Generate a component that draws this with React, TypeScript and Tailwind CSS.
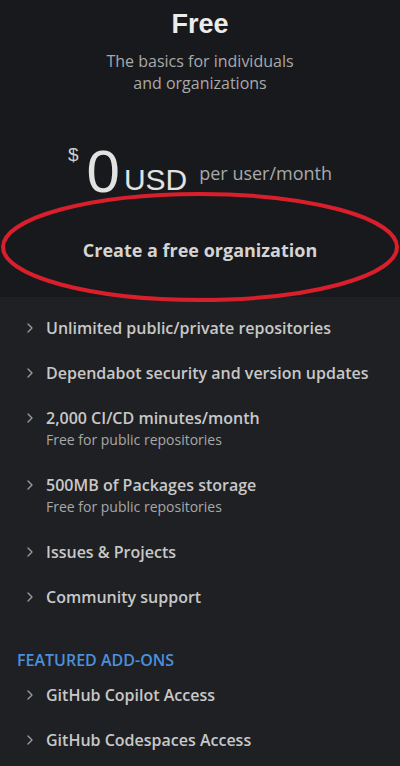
import { ChevronRight } from 'lucide-react'

const features = [
  { title: 'Unlimited public/private repositories' },
  { title: 'Dependabot security and version updates' },
  { title: '2,000 CI/CD minutes/month', sub: 'Free for public repositories' },
  { title: '500MB of Packages storage', sub: 'Free for public repositories' },
  { title: 'Issues & Projects' },
  { title: 'Community support' },
]

const addons = ['GitHub Copilot Access', 'GitHub Codespaces Access']

function Item({ title, sub }: { title: string; sub?: string }) {
  return (
    <li className="flex items-start gap-[8px]">
      <ChevronRight size={16} strokeWidth={2} className="mt-[3px] shrink-0 text-[#9a9a9a]" />
      <div>
        <p className="text-[16px] leading-[22px] font-semibold text-[#c8c8c8]">{title}</p>
        {sub && <p className="text-[14px] leading-[22px] text-[#a8a8a8]">{sub}</p>}
      </div>
    </li>
  )
}

export default function App() {
  return (
    <div className="w-[400px] h-[766px] overflow-hidden bg-[#1f2023] font-['Open_Sans',sans-serif]">
      {/* header */}
      <section className="relative h-[297px] bg-[#18191c] flex flex-col items-center">
        <h1 className="mt-[6px] text-[27px] leading-[36px] font-bold text-[#ececec] font-['Liberation_Sans',sans-serif]">
          Free
        </h1>
        <p className="mt-[8px] text-[16px] leading-[22px] text-[#a9a9a9] text-center">
          The basics for individuals
          <br />
          and organizations
        </p>
        <div className="mt-[53px] flex items-end font-['Liberation_Sans',sans-serif] text-[#e2e2e2]">
          <span className="self-start text-[19px] leading-[20px] mt-[-2px] text-[#cfcfcf]">$</span>
          <span className="ml-[8px] text-[60px] leading-[50px] font-light">0</span>
          <span className="ml-[4px] text-[30px] leading-[26px] mb-[4px]">USD</span>
          <span className="ml-[12px] self-start mt-[15px] text-[18px] leading-[22px] text-[#a9a9a9] font-['Open_Sans',sans-serif]">
            per user/month
          </span>
        </div>
        <button className="mt-[41px] text-[18px] leading-[24px] font-bold text-[#d4d4d4]">
          Create a free organization
        </button>
        <svg className="absolute left-0 top-[190px] pointer-events-none" width="400" height="116" viewBox="0 0 400 116">
          <ellipse cx="200" cy="57" rx="197" ry="53" fill="none" stroke="#d81f2b" strokeWidth="4" />
        </svg>
      </section>

      {/* features */}
      <section className="px-[22px] pt-[20px]">
        <ul className="flex flex-col gap-[23px]">
          {features.map(f => (
            <Item key={f.title} {...f} />
          ))}
        </ul>
        <h2 className="mt-[42px] ml-[-5px] text-[16px] leading-[20px] font-semibold text-[#4a90dc]">
          FEATURED ADD-ONS
        </h2>
        <ul className="mt-[14px] flex flex-col gap-[23px]">
          {addons.map(a => (
            <Item key={a} title={a} />
          ))}
        </ul>
      </section>
    </div>
  )
}
